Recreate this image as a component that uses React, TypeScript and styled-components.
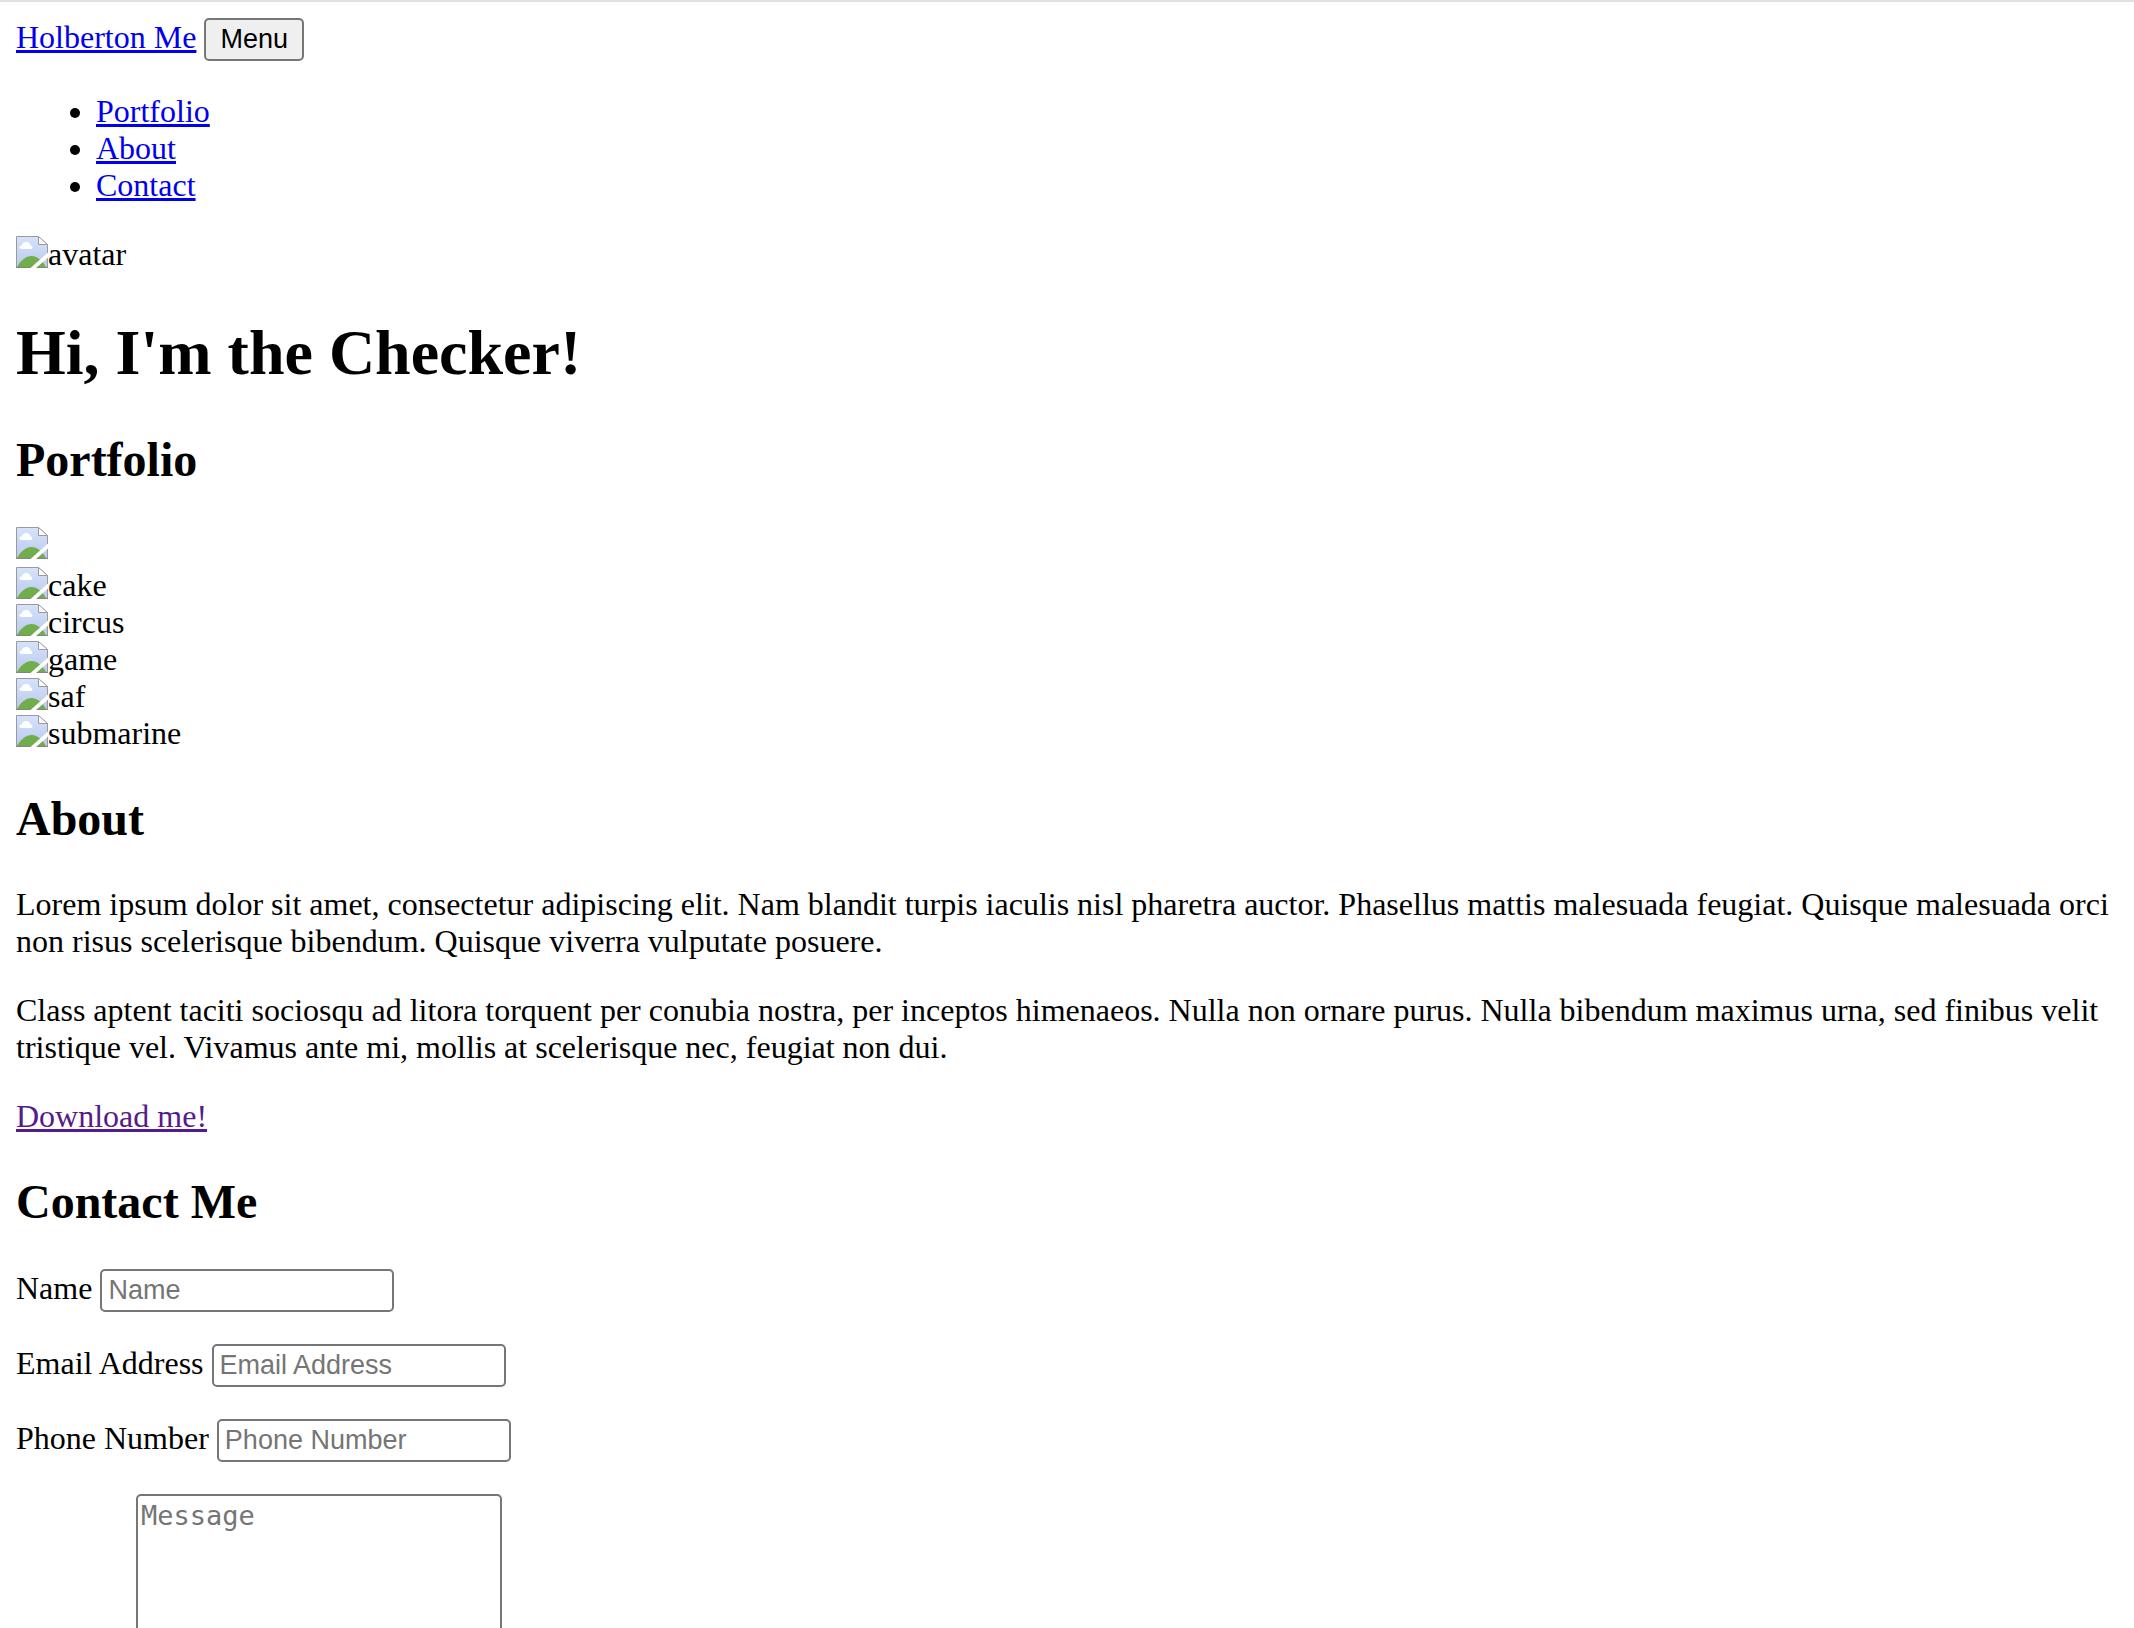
import React from "react";
import styled, { createGlobalStyle } from "styled-components";

const GlobalStyle = createGlobalStyle`
  body {
    margin: 0;
    background: #fff;
    color: #000;
    font-family: "Liberation Serif", "Times New Roman", Times, serif;
    font-size: 32px;
    line-height: 37px;
  }
`;

const Page = styled.div`
  border-top: 2px solid #dee1e6;
  padding: 16px;
`;

const Header = styled.header`
  display: flex;
  align-items: baseline;
  gap: 8px;
`;

const Link = styled.a<{ $visited?: boolean }>`
  color: ${(p) => (p.$visited ? "#551a8b" : "#0000ee")};
  text-decoration: underline;
  text-decoration-thickness: 3px;
`;

const MenuButton = styled.button`
  box-sizing: border-box;
  height: 43px;
  margin: 0;
  padding: 2px 14px;
  border: 2px solid #767676;
  border-radius: 5px;
  background: #efefef;
  color: #000;
  font-family: "Liberation Sans", Arial, sans-serif;
  font-size: 27px;
  line-height: 31px;
`;

const NavList = styled.ul`
  margin: 32px 0;
  padding-left: 80px;
  list-style: disc;
`;

const Picture = styled.div<{ $captioned: boolean }>`
  display: flex;
  height: ${(p) => (p.$captioned ? 37 : 40)}px;
`;

const BrokenIcon = styled.svg`
  flex: none;
  width: 32px;
  height: 32px;
`;

const Title = styled.h1`
  margin: 43px 0;
  font-size: 64px;
  line-height: 74px;
`;

const Heading = styled.h2`
  margin: 40px 0;
  font-size: 48px;
  line-height: 54px;
`;

const Paragraph = styled.p`
  margin: 32px 0;
`;

const Field = styled.div`
  margin-bottom: 32px;
`;

const TextInput = styled.input`
  box-sizing: border-box;
  width: 294px;
  height: 43px;
  margin: 0;
  padding: 2px 6px;
  border: 2px solid #767676;
  border-radius: 5px;
  background: #fff;
  font-family: "Liberation Sans", Arial, sans-serif;
  font-size: 27px;
  line-height: 31px;

  &::placeholder {
    color: #757575;
  }
`;

const MessageBox = styled.textarea`
  box-sizing: border-box;
  width: 366px;
  height: 174px;
  margin: 0;
  padding: 4px 3px;
  border: 2px solid #767676;
  border-radius: 5px;
  background: #fff;
  font-family: "DejaVu Sans Mono", monospace;
  font-size: 27px;
  line-height: 31px;

  &::placeholder {
    color: #757575;
  }
`;

function MissingImage({ alt }: { alt: string }) {
  return (
    <Picture $captioned={alt !== ""}>
      <BrokenIcon viewBox="0 0 32 32" aria-hidden="true">
        <defs>
          <linearGradient id="sky" x1="0" y1="0" x2="0" y2="1">
            <stop offset="0" stopColor="#d6e3fb" />
            <stop offset="1" stopColor="#b9c9ec" />
          </linearGradient>
        </defs>
        <path d="M0.5 0.5H22.5L31.5 8.5V31.5H0.5Z" fill="url(#sky)" stroke="#9a9a9a" />
        <path d="M1 31C5 24 10 20 15.5 20C21 20 26 24 30 31Z" fill="#70ad4b" />
        <path
          d="M5.5 13C3 13 2.5 10 5.5 9.5C6 7 8 6 10.5 6C13 6 14 7.5 14.5 9.5C17 10 17 13 15 13Z"
          fill="#fff"
        />
        <path d="M22 0H32V8Z" fill="#fff" />
        <path d="M22.5 0.5V8.5H31.5Z" fill="#fff" stroke="#9a9a9a" />
        <path d="M0 31.5H32" stroke="#858585" />
        <path d="M14.5 32L32 16.5V21.5L20 32Z" fill="#fff" />
      </BrokenIcon>
      {alt}
    </Picture>
  );
}

const sections = ["Portfolio", "About", "Contact"];
const works = ["", "cake", "circus", "game", "saf", "submarine"];
const fields = [
  { id: "name", label: "Name", type: "text" },
  { id: "email", label: "Email Address", type: "email" },
  { id: "phone", label: "Phone Number", type: "tel" },
];

export default function App() {
  return (
    <Page>
      <GlobalStyle />
      <Header>
        <Link href="#top">Holberton Me</Link>
        <MenuButton type="button">Menu</MenuButton>
      </Header>
      <nav>
        <NavList>
          {sections.map((name) => (
            <li key={name}>
              <Link href={`#${name.toLowerCase()}`}>{name}</Link>
            </li>
          ))}
        </NavList>
      </nav>
      <main>
        <MissingImage alt="avatar" />
        <Title>Hi, I'm the Checker!</Title>
        <section id="portfolio">
          <Heading>Portfolio</Heading>
          {works.map((name) => (
            <MissingImage key={name} alt={name} />
          ))}
        </section>
        <section id="about">
          <Heading>About</Heading>
          <Paragraph>
            Lorem ipsum dolor sit amet, consectetur adipiscing elit. Nam blandit turpis iaculis nisl
            pharetra auctor. Phasellus mattis malesuada feugiat. Quisque malesuada orci non risus
            scelerisque bibendum. Quisque viverra vulputate posuere.
          </Paragraph>
          <Paragraph>
            Class aptent taciti sociosqu ad litora torquent per conubia nostra, per inceptos
            himenaeos. Nulla non ornare purus. Nulla bibendum maximus urna, sed finibus velit
            tristique vel. Vivamus ante mi, mollis at scelerisque nec, feugiat non dui.
          </Paragraph>
          <Link href="#download" $visited>
            Download me!
          </Link>
        </section>
        <section id="contact">
          <Heading>Contact Me</Heading>
          <form>
            {fields.map((f) => (
              <Field key={f.id}>
                <label htmlFor={f.id}>{f.label}</label>{" "}
                <TextInput id={f.id} type={f.type} placeholder={f.label} />
              </Field>
            ))}
            <Field>
              <label htmlFor="message">Message</label>{" "}
              <MessageBox id="message" placeholder="Message" />
            </Field>
          </form>
        </section>
      </main>
    </Page>
  );
}
